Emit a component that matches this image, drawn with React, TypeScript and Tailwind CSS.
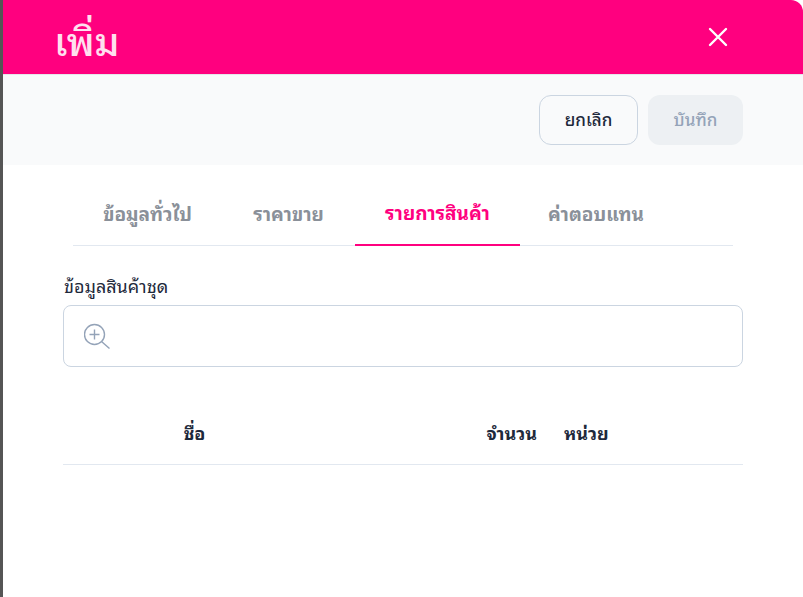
const tabs = [
  { label: "ข้อมูลทั่วไป", width: "w-[149px]" },
  { label: "ราคาขาย", width: "w-[133px]" },
  { label: "รายการสินค้า", width: "w-[165px]" },
  { label: "ค่าตอบแทน", width: "w-[152px]" },
];

export default function App() {
  return (
    <div className="flex h-[597px] w-[803px] overflow-hidden bg-white font-['Noto_Sans_Thai_Looped','Tahoma','Loma','Garuda','Waree','Inter',sans-serif]">
      <div className="w-[3px] bg-[#555555]"></div>
      <div className="flex-1 overflow-hidden rounded-tr-xl bg-white">
        {/* header */}
        <header className="flex h-[74px] items-center justify-between bg-[#ff007f] pl-[51px] pr-[75px]">
          <h1 className="pt-[4px] text-[39px] font-medium leading-[60px] text-[#ffe0ef]">เพิ่ม</h1>
          <button className="text-white">
            <svg width="20" height="20" viewBox="0 0 20 20" fill="none" stroke="currentColor" strokeWidth="2.4" strokeLinecap="round">
              <path d="M2 2l16 16M18 2L2 18" />
            </svg>
          </button>
        </header>

        {/* actions */}
        <div className="flex h-[91px] items-center justify-end gap-[10px] border-t border-[#e5e7eb] bg-[#f9fafb] pr-[60px]">
          <button className="h-[50px] w-[99px] rounded-xl border border-[#cbd5e1] pb-[2px] text-[17px] font-medium text-[#1e293b]">
            ยกเลิก
          </button>
          <button className="h-[50px] w-[95px] rounded-xl bg-[#edf0f3] pb-[2px] text-[17px] font-medium text-[#94a3b8]">
            บันทึก
          </button>
        </div>

        <div className="px-[60px]">
          {/* tabs */}
          <div className="mx-[10px] mt-[20px] flex h-[61px] border-b border-[#e2e8f0]">
            {tabs.map((t, i) => (
              <div
                key={t.label}
                className={
                  t.width +
                  (i === 2
                    ? " -mb-px flex items-center justify-center border-b-2 border-[#ff007f] pb-[4px] text-[19px] font-bold text-[#ff007f]"
                    : " flex items-center justify-center pb-[4px] text-[19px] font-bold text-[#8a9099]")
                }
              >
                {t.label}
              </div>
            ))}
          </div>

          {/* search */}
          <label className="mt-[25px] block pl-px text-[18px] font-normal leading-[28px] text-[#1e293b]">ข้อมูลสินค้าชุด</label>
          <div className="mt-[6px] flex h-[62px] items-center rounded-lg border border-[#cbd5e1] pl-[20px]">
            <svg width="26" height="26" viewBox="0 0 26 26" fill="none" stroke="#94a3b8" strokeWidth="1.4">
              <circle cx="10.5" cy="11.5" r="10" />
              <path d="M10.5 6.5v10M5.5 11.5h10M17.5 18.5l8 7" />
            </svg>
          </div>

          {/* table head */}
          <div className="mt-[36px] flex h-[62px] items-center border-b border-[#e2e8f0] pb-[2px] text-[18px] font-bold text-[#1e293b]">
            <div className="w-[263px] text-center">ชื่อ</div>
            <div className="w-[211px] text-right">จำนวน</div>
            <div className="ml-[27px]">หน่วย</div>
          </div>
        </div>
      </div>
    </div>
  );
}
